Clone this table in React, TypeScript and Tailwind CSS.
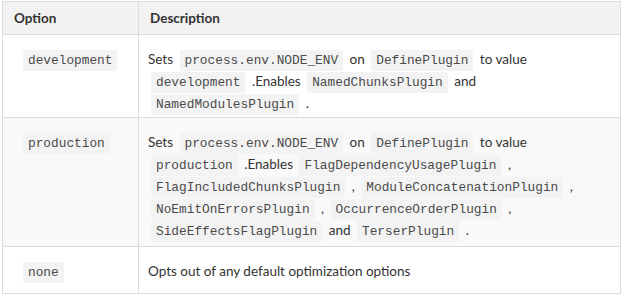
import React from 'react'

const C = ({ children }: { children: React.ReactNode }) => (
  <code className="bg-[#f3f3f3] mx-[3px] px-[5px] py-[3px] rounded-[2px] text-[12.8px] leading-none text-[#4a4a4a] font-['Liberation_Mono','DejaVu_Sans_Mono',monospace]">
    {children}
  </code>
)

const rows: { opt: string; h: string; desc: React.ReactNode; shade?: boolean }[] = [
  {
    opt: 'development',
    h: 'h-[83px]',
    desc: (
      <>
        Sets <C>process.env.NODE_ENV</C> on <C>DefinePlugin</C> to value <C>development</C> .Enables{' '}
        <C>NamedChunksPlugin</C> and <C>NamedModulesPlugin</C> .
      </>
    ),
  },
  {
    opt: 'production',
    h: 'h-[129px]',
    shade: true,
    desc: (
      <>
        Sets <C>process.env.NODE_ENV</C> on <C>DefinePlugin</C> to value <C>production</C> .Enables{' '}
        <C>FlagDependencyUsagePlugin</C> , <C>FlagIncludedChunksPlugin</C> , <C>ModuleConcatenationPlugin</C> ,{' '}
        <C>NoEmitOnErrorsPlugin</C> , <C>OccurrenceOrderPlugin</C> , <C>SideEffectsFlagPlugin</C> and{' '}
        <C>TerserPlugin</C> .
      </>
    ),
  },
  { opt: 'none', h: 'h-[47px]', desc: <>Opts out of any default optimization options</> },
]

export default function App() {
  return (
    <div className="bg-white w-[624px] h-[297px] pl-[2px] pt-[1px] font-['Lato',sans-serif] text-[#333]">
      <table className="w-[619px] border-collapse border border-[#dcdcdc] text-[13.5px]">
        <thead>
          <tr className="bg-[#f2f2f2] h-[33px]">
            <th className="w-[136px] border border-[#dcdcdc] text-left font-bold px-[11px]">Option</th>
            <th className="border border-[#dcdcdc] text-left font-bold px-[11px]">Description</th>
          </tr>
        </thead>
        <tbody>
          {rows.map((r) => (
            <tr key={r.opt} className={`${r.h} ${r.shade ? 'bg-[#f9f9f9]' : 'bg-white'}`}>
              <td className="border border-[#dcdcdc] align-top pl-[17px] pt-[13px] pb-0 leading-[22px]">
                <C>{r.opt}</C>
              </td>
              <td className="border border-[#dcdcdc] align-top pl-[9px] pr-[10px] pt-[13px] pb-0 leading-[22px]">
                {r.desc}
              </td>
            </tr>
          ))}
        </tbody>
      </table>
    </div>
  )
}
